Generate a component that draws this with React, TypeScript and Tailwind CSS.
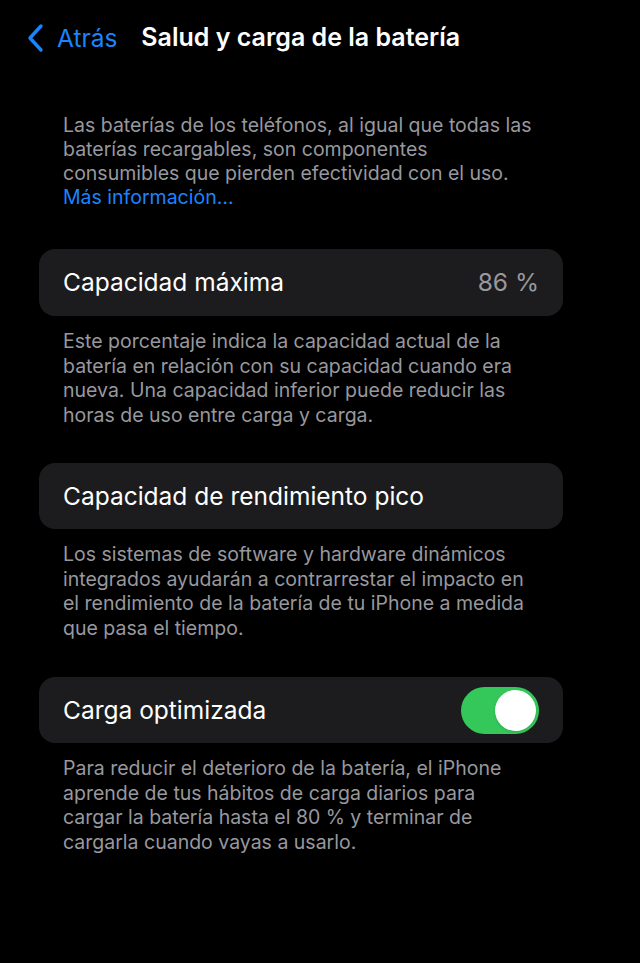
import React, { useState } from 'react';

const font = { fontFamily: 'Inter, "Noto Sans", sans-serif' };

function Note({ children }: { children: React.ReactNode }) {
  return (
    <p className="ml-[63px] mr-[102px] mt-[13px] text-[19.5px] leading-[24.5px] text-[#98989e]">
      {children}
    </p>
  );
}

function Toggle({ on, onChange }: { on: boolean; onChange: () => void }) {
  return (
    <button
      type="button"
      onClick={onChange}
      className={`relative h-[47px] w-[78px] rounded-full ${on ? 'bg-[#34c759]' : 'bg-[#39393d]'}`}
    >
      <span
        className={`absolute top-[3px] h-[41px] w-[41px] rounded-full bg-white shadow ${on ? 'right-[3px]' : 'left-[3px]'}`}
      />
    </button>
  );
}

export default function App() {
  const [optimized, setOptimized] = useState(true);

  return (
    <div className="min-h-[963px] w-full bg-black text-white" style={font}>
      <header className="flex h-[76px] items-center pl-[25px]">
        <svg width="22" height="30" viewBox="0 0 22 30" className="mr-[10px]">
          <path d="M16 3 L5 15 L16 27" fill="none" stroke="#1a84ff" strokeWidth="3.4" strokeLinecap="round" strokeLinejoin="round" />
        </svg>
        <span className="text-[24.5px] text-[#1a84ff]">Atrás</span>
        <h1 className="ml-[24px] text-[25px] font-semibold">Salud y carga de la batería</h1>
      </header>

      <p className="ml-[63px] mr-[98px] mt-[37px] text-[19.5px] leading-[24px] text-[#98989e]">
        Las baterías de los teléfonos, al igual que todas las baterías recargables, son componentes consumibles que pierden efectividad con el uso.
        <br />
        <span className="text-[#1a84ff]">Más información…</span>
      </p>

      <div className="ml-[39px] mr-[77px] mt-[40px] flex h-[67px] items-center justify-between rounded-[16px] bg-[#1c1c1e] px-[24px]">
        <span className="text-[24.5px]">Capacidad máxima</span>
        <span className="text-[24.5px] text-[#98989e]">86 %</span>
      </div>
      <Note>
        Este porcentaje indica la capacidad actual de la batería en relación con su capacidad cuando era nueva. Una capacidad inferior puede reducir las horas de uso entre carga y carga.
      </Note>

      <div className="ml-[39px] mr-[77px] mt-[36px] flex h-[66px] items-center rounded-[16px] bg-[#1c1c1e] px-[24px]">
        <span className="text-[24.5px]">Capacidad de rendimiento pico</span>
      </div>
      <Note>
        Los sistemas de software y hardware dinámicos integrados ayudarán a contrarrestar el impacto en el rendimiento de la batería de tu iPhone a medida que pasa el tiempo.
      </Note>

      <div className="ml-[39px] mr-[77px] mt-[37px] flex h-[66px] items-center justify-between rounded-[16px] bg-[#1c1c1e] px-[24px]">
        <span className="text-[24.5px]">Carga optimizada</span>
        <Toggle on={optimized} onChange={() => setOptimized(!optimized)} />
      </div>
      <Note>
        Para reducir el deterioro de la batería, el iPhone aprende de tus hábitos de carga diarios para cargar la batería hasta el 80 % y terminar de cargarla cuando vayas a usarlo.
      </Note>
    </div>
  );
}
